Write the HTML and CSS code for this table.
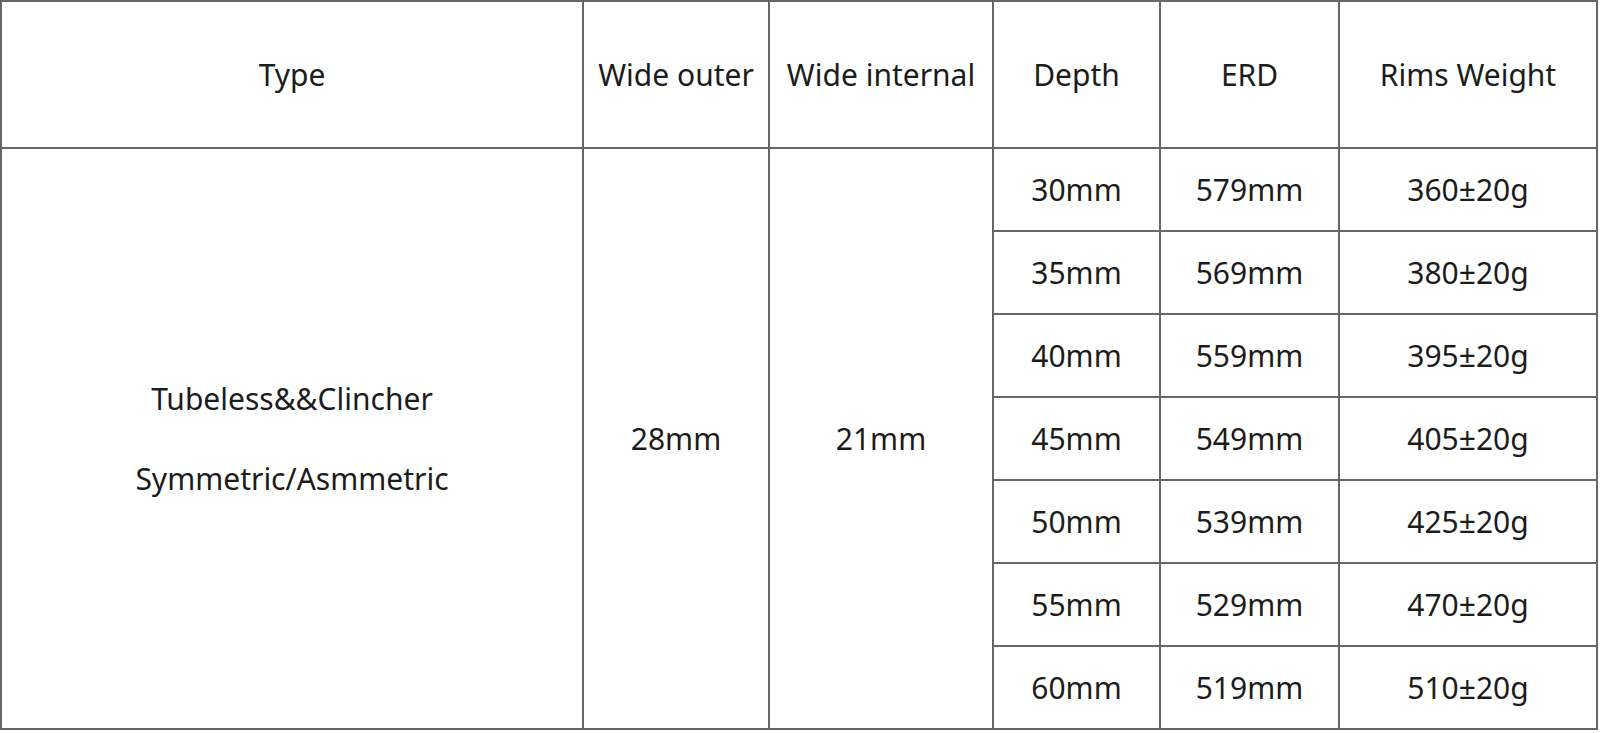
FILE: index.html
```html
<!DOCTYPE html>
<html lang="en">
<head>
<meta charset="utf-8">
<title>Rim specifications</title>
<link rel="stylesheet" href="styles.css">
</head>
<body>
<table class="spec">
  <colgroup>
    <col class="c-type">
    <col class="c-outer">
    <col class="c-inner">
    <col class="c-depth">
    <col class="c-erd">
    <col class="c-weight">
  </colgroup>
  <thead>
    <tr class="head">
      <th>Type</th>
      <th>Wide outer</th>
      <th>Wide internal</th>
      <th>Depth</th>
      <th>ERD</th>
      <th>Rims Weight</th>
    </tr>
  </thead>
  <tbody>
    <tr>
      <td rowspan="7" class="type">Tubeless&amp;&amp;Clincher<br>Symmetric/Asmmetric</td>
      <td rowspan="7">28mm</td>
      <td rowspan="7">21mm</td>
      <td>30mm</td><td>579mm</td><td>360±20g</td>
    </tr>
    <tr><td>35mm</td><td>569mm</td><td>380±20g</td></tr>
    <tr><td>40mm</td><td>559mm</td><td>395±20g</td></tr>
    <tr><td>45mm</td><td>549mm</td><td>405±20g</td></tr>
    <tr><td>50mm</td><td>539mm</td><td>425±20g</td></tr>
    <tr><td>55mm</td><td>529mm</td><td>470±20g</td></tr>
    <tr><td>60mm</td><td>519mm</td><td>510±20g</td></tr>
  </tbody>
</table>
</body>
</html>
```

FILE: styles.css
```css
html, body {
  margin: 0;
  padding: 0;
  background: #ffffff;
}

body {
  font-family: "Noto Sans", "Open Sans", "DejaVu Sans", sans-serif;
  color: #1c1c1c;
}

.spec {
  border-collapse: collapse;
  table-layout: fixed;
  width: 1596px;
  margin: 0;
  border: 2px solid #444444;
}

.c-type { width: 582px; }
.c-outer { width: 186px; }
.c-inner { width: 224px; }
.c-depth { width: 167px; }
.c-erd { width: 179px; }
.c-weight { width: 258px; }

.spec th,
.spec td {
  border: 2px solid #666666;
  padding: 0;
  text-align: center;
  vertical-align: middle;
  font-size: 30px;
  font-weight: 400;
  line-height: 38px;
  white-space: nowrap;
}

.spec .head th {
  height: 145px;
}

.spec tbody tr {
  height: 83px;
}

.spec td.type {
  line-height: 80px;
}
```
